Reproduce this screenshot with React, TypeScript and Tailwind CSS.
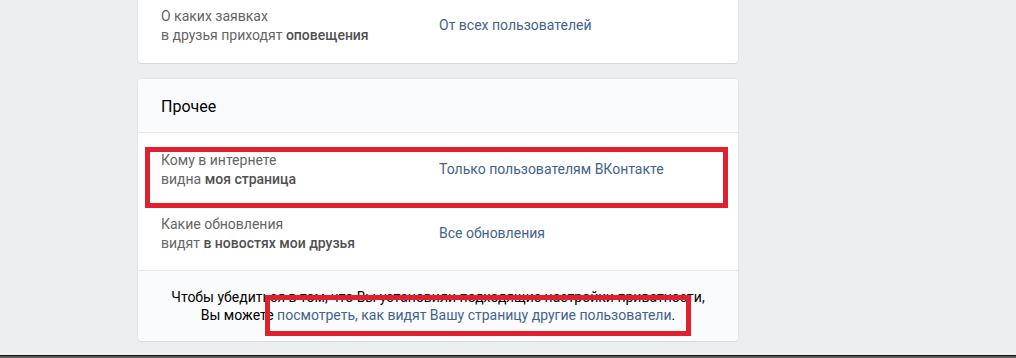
import React from "react";

const font = { fontFamily: "Roboto, 'Open Sans', 'Noto Sans', sans-serif" };

function Row({ l1, l2a, l2b, value, cls = "" }: { l1: string; l2a: string; l2b: string; value: string; cls?: string }) {
  return (
    <div className={`flex items-center px-[23px] py-[13px] ${cls}`}>
      <div className="w-[278px] text-[14px] leading-[19px] text-[#656565]">
        <div>{l1}</div>
        <div>
          {l2a} <span className="font-medium text-[#505050]">{l2b}</span>
        </div>
      </div>
      <div className="text-[14px] leading-[19px] text-[#42648b] -mt-[2px]">{value}</div>
    </div>
  );
}

export default function App() {
  return (
    <div className="relative w-[1016px] h-[358px] overflow-hidden bg-[#edeef0]" style={font}>
      <div className="ml-[138px] w-[600px] flex flex-col gap-[16px]">
        {/* top card (clipped) */}
        <div className="bg-white rounded-b-[4px] shadow-[0_1px_0_0_#d7d8db,0_0_0_1px_#e3e4e8] pb-[5px]">
          <Row l1="О каких заявках" l2a="в друзья приходят" l2b="оповещения" value="От всех пользователей" cls="pt-[7px]" />
        </div>
        {/* Прочее card */}
        <div className="bg-white rounded-[4px] shadow-[0_1px_0_0_#d7d8db,0_0_0_1px_#e3e4e8] overflow-hidden">
          <div className="h-[54px] bg-[#fafbfc] border-b border-[#e7e8ec] flex items-center px-[23px] pt-[2px] text-[16px] text-[#000]">
            Прочее
          </div>
          <div className="pt-[5px] pb-[4px]">
            <Row l1="Кому в интернете" l2a="видна" l2b="моя страница" value="Только пользователям ВКонтакте" />
            <Row l1="Какие обновления" l2a="видят" l2b="в новостях мои друзья" value="Все обновления" />
          </div>
          <div className="bg-[#fafbfc] border-t border-[#e7e8ec] pt-[17px] pb-[17px] text-center text-[14px] leading-[18px] text-[#000]">
            <div>Чтобы убедиться в том, что Вы установили подходящие настройки приватности,</div>
            <div>
              Вы можете <span className="text-[#42648b]">посмотреть, как видят Вашу страницу другие пользователи</span>.
            </div>
          </div>
        </div>
      </div>

      {/* annotation boxes */}
      <div className="absolute left-[145px] top-[147px] w-[583px] h-[61px] border-[5px] border-[#e0212d]" />
      <div className="absolute left-[265px] top-[295px] w-[426px] h-[41px] border-[5px] border-[#e0212d]" />

      {/* bottom edge */}
      <div className="absolute left-0 right-0 top-[355px] h-[1px] bg-[#111]" />
      <div className="absolute left-0 right-0 top-[356px] h-[2px] bg-[#5c5c5c]" />
    </div>
  );
}
